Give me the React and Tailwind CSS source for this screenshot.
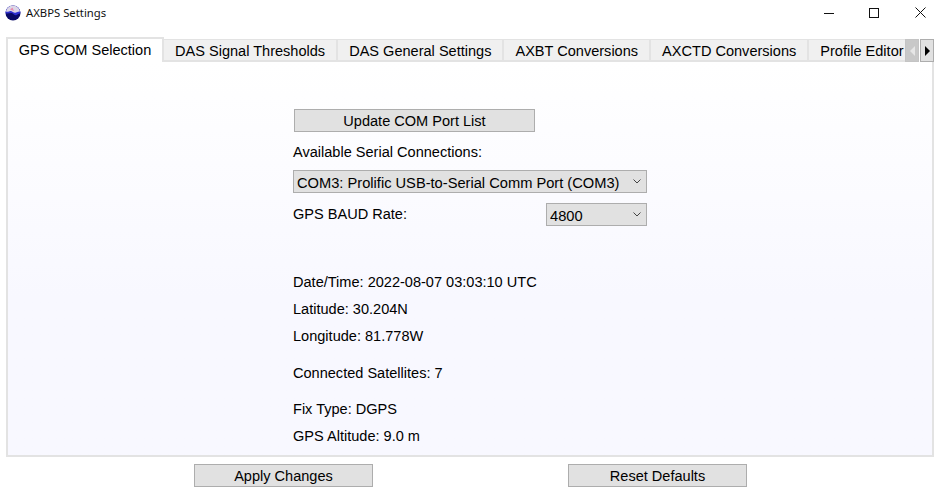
const tabs = ['DAS Signal Thresholds', 'DAS General Settings', 'AXBT Conversions', 'AXCTD Conversions', 'Profile Editor'];

function AppIcon() {
  return (
    <svg width="16" height="16" viewBox="0 0 16 16">
      <circle cx="8" cy="8" r="7.5" fill="#0a0a66" />
      <path d="M.6 8c2 1.500 4 -.5 6 0s3 3 5 2 3 -1.500 3.800 -2C15.400 3.500 12 .5 8 .5S.6 3.500 .6 8z" fill="#2f2fd0" />
      <path d="M1 6.500c2 1 3.300 -1 5 -.5s3 2.500 5 1.500 3 -1 4 -1C14.300 3 11.500 .5 8 .5S1.700 3 1 6.500z" fill="#dcd6e6" />
      <path d="M5 4.500l2.500 -2 1.500 3.500z" fill="#e88ab0" />
    </svg>
  );
}

function ScrollButtons() {
  return (
    <div className="absolute right-0 top-0 flex h-[23px] gap-px">
      <div className="flex w-[14px] items-center justify-center border border-[#c4c4c4] bg-[#c8c8c8]">
        <div className="h-0 w-0 border-y-[5px] border-r-[5px] border-y-transparent border-r-[#e6e6e6]" />
      </div>
      <div className="flex w-[14px] items-center justify-center border border-[#adadad] bg-[#e1e1e1]">
        <div className="h-0 w-0 border-y-[5px] border-l-[5px] border-y-transparent border-l-black" />
      </div>
    </div>
  );
}

function GrayButton({ className, children }) {
  return (
    <button className={`h-[23px] border border-[#adadad] bg-[#e1e1e1] pt-px text-center text-black ${className}`}>
      {children}
    </button>
  );
}

function Dropdown({ className, value }) {
  return (
    <div className={`relative h-[23px] ${className}`}>
      <select className="h-full w-full appearance-none border border-[#adadad] bg-[#e1e1e1] pl-[3px] pt-px text-[14.67px] text-black" defaultValue={value}>
        <option>{value}</option>
      </select>
      <svg className="absolute right-[6px] top-[9px]" width="8" height="5" viewBox="0 0 8 5" fill="none">
        <path d="M.5 .5l3.500 3.500 3.500 -3.500" stroke="#444" />
      </svg>
    </div>
  );
}

export default function App() {
  return (
    <div className="flex h-[497px] w-[942px] flex-col overflow-hidden bg-white font-['Liberation_Sans',Arial,sans-serif] text-[14.55px] text-black">
      <div className="flex h-[37px] items-start justify-between">
        <div className="flex items-center gap-[5px] pl-[5px] pt-[5px]">
          <AppIcon />
          <span className="font-['Noto_Sans',sans-serif] text-[11.3px] text-[#111]">AXBPS Settings</span>
        </div>
        <div className="flex items-center pr-[16px] pt-[7px]">
          <svg width="11" height="10" viewBox="0 0 11 10"><path d="M0 5.500h10" stroke="#111" /></svg>
          <svg className="ml-[34px]" width="11" height="10" viewBox="0 0 11 10" fill="none"><rect x=".5" y=".5" width="9" height="9" stroke="#111" /></svg>
          <svg className="ml-[35px]" width="11" height="11" viewBox="0 0 11 11" fill="none"><path d="M.5 .5l10 10M10.500 .5l-10 10" stroke="#111" /></svg>
        </div>
      </div>

      <div className="ml-[6px] flex h-[420px] w-[928px] flex-col">
        <div className="relative z-10 flex h-[25px] items-end overflow-hidden">
          <div className="flex h-[25px] w-[158px] shrink-0 items-center justify-center border-x-2 border-t-2 border-[#e3e3e3] bg-white">
            GPS COM Selection
          </div>
          <div className="relative flex min-w-0 flex-1 overflow-hidden">
            {tabs.map((t) => (
              <div key={t} className="flex h-[23px] shrink-0 items-center whitespace-nowrap border-b-2 border-r-2 border-t border-[#e3e3e3] bg-[#f0f0f0] px-[11px] pt-[3px]">
                {t}
              </div>
            ))}
            <ScrollButtons />
          </div>
        </div>

        <div className="flex flex-1 flex-col items-center border-2 border-t-0 border-[#e3e3e3] bg-gradient-to-b from-white to-[#f8f8ff] to-[60%] pt-[47px]">
          <div className="flex w-[354px] flex-col">
            <GrayButton className="ml-px w-[241px]">Update COM Port List</GrayButton>
            <div className="mt-[11px] h-[18px] leading-[18px]">Available Serial Connections:</div>
            <Dropdown className="mt-[9px] w-[354px]" value="COM3: Prolific USB-to-Serial Comm Port (COM3)" />
            <div className="mt-[10px] flex items-center justify-between">
              <span className="pt-px">GPS BAUD Rate:</span>
              <Dropdown className="w-[101px]" value="4800" />
            </div>
            <div className="mt-[47px] h-[18px] leading-[18px]">Date/Time: 2022-08-07 03:03:10 UTC</div>
            <div className="mt-[9px] h-[18px] leading-[18px]">Latitude: 30.204N</div>
            <div className="mt-[9px] h-[18px] leading-[18px]">Longitude: 81.778W</div>
            <div className="mt-[19px] h-[18px] leading-[18px]">Connected Satellites: 7</div>
            <div className="mt-[18px] h-[18px] leading-[18px]">Fix Type: DGPS</div>
            <div className="mt-[9px] h-[18px] leading-[18px]">GPS Altitude: 9.0 m</div>
          </div>
        </div>
      </div>

      <div className="mt-[7px] flex pl-[194px]">
        <GrayButton className="w-[179px]">Apply Changes</GrayButton>
        <GrayButton className="ml-[195px] w-[179px]">Reset Defaults</GrayButton>
      </div>
    </div>
  );
}
